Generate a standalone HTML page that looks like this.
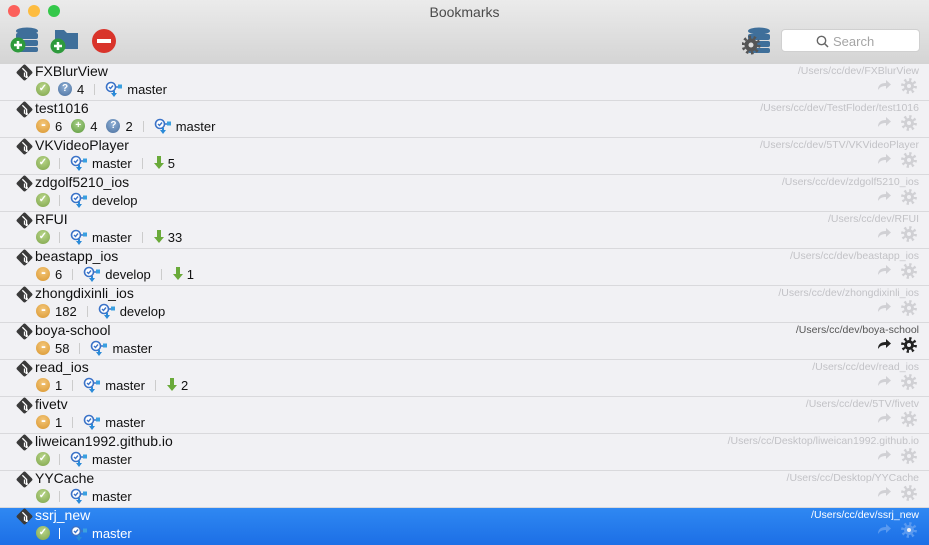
<!DOCTYPE html><html><head><meta charset="utf-8"><style>
*{margin:0;padding:0;box-sizing:border-box}
body{width:929px;height:543px;overflow:hidden;font-family:"Liberation Sans",sans-serif;background:#f0f0f2;position:relative}
.tb{position:absolute;left:0;top:0;width:929px;height:65px;background:linear-gradient(#ebebeb,#d4d4d4);border-bottom:1px solid #b5b5b5}
.title{position:absolute;top:4px;width:100%;text-align:center;font-size:14px;color:#4a4a4a}
.dot{position:absolute;top:5px;width:12px;height:12px;border-radius:50%}
.search{position:absolute;left:781px;top:29px;width:139px;height:23px;background:#fff;border-radius:4px;border:1px solid #d0d0d0;font-size:13px;color:#a5a5a5;padding:4px 0 0 51px}
.row{position:absolute;left:0;width:929px;height:37px;border-bottom:1px solid #d9d9dc;background:#f1f1f4}
.name{position:absolute;left:35px;top:-1px;font-size:14px;color:#111}
.gi{position:absolute;left:16px;top:0px}
.l2{position:absolute;left:36px;top:17px;height:16px;display:flex;align-items:center;font-size:13px;color:#111}
.c{width:14px;height:14px;border-radius:50%;display:inline-block;margin-right:5px;position:relative}
.ok{background:radial-gradient(circle at 50% 35%,#b9d68a,#7ea44a)}
.q{background:radial-gradient(circle at 50% 35%,#8fb0d6,#4a6f9e)}
.p{background:radial-gradient(circle at 50% 35%,#a9d08a,#5c9a3c)}
.m{background:radial-gradient(circle at 50% 35%,#f4c77a,#d9962f)}
.c i{position:absolute;left:0;top:0;width:14px;height:14px;color:#fff;font-style:normal;font-size:10px;font-weight:bold;text-align:center;line-height:14px}
.n{margin-right:9px}
.sep{width:1px;height:11px;background:#ccc;margin:0 10px 0 1px}
.br{margin-right:4px}
.path{position:absolute;right:10px;top:1px;font-size:10.5px;color:#c2c2c6}
.ic{position:absolute;top:15px}
.sel{background:linear-gradient(#2f88f2,#1c6fe6);border:none}
.sel .name,.sel .l2,.sel .path{color:#fff}
</style></head><body>
<div class="tb">
<div class="dot" style="left:8px;background:#fc605b"></div>
<div class="dot" style="left:28px;background:#fdbc40"></div>
<div class="dot" style="left:48px;background:#34c84a"></div>
<div class="title">Bookmarks</div>
<svg style="position:absolute;left:10px;top:26px" width="30" height="28"><ellipse cx="17" cy="5" rx="11" ry="3.5" fill="#3f6f9a"/><rect x="6" y="7" width="22" height="6" rx="2" fill="#3f6f9a"/><rect x="6" y="14" width="22" height="6" rx="2" fill="#3f6f9a"/><rect x="6" y="21" width="22" height="5" rx="2" fill="#3f6f9a"/><circle cx="8" cy="19" r="7.5" fill="#2e9a3c"/><path d="M8 15v8M4 19h8" stroke="#fff" stroke-width="2.5"/></svg>
<svg style="position:absolute;left:50px;top:28px" width="30" height="26"><path d="M5 2h9l3 3h11v16H5z" fill="#3f6f9a"/><circle cx="8" cy="18" r="7.5" fill="#2e9a3c"/><path d="M8 14v8M4 18h8" stroke="#fff" stroke-width="2.5"/></svg>
<svg style="position:absolute;left:91px;top:28px" width="26" height="26"><circle cx="13" cy="13" r="12" fill="#d9342b"/><rect x="6" y="11" width="14" height="4" fill="#fff"/></svg>
<svg style="position:absolute;left:742px;top:27px" width="30" height="28"><ellipse cx="17" cy="4" rx="11" ry="3.5" fill="#3f6f9a"/><rect x="6" y="7" width="22" height="6" rx="2" fill="#3f6f9a"/><rect x="6" y="14" width="22" height="6" rx="2" fill="#3f6f9a"/><rect x="6" y="21" width="22" height="5" rx="2" fill="#3f6f9a"/><circle cx="9" cy="18" r="6.5" fill="#555"/><circle cx="9" cy="18" r="8" fill="none" stroke="#555" stroke-width="3" stroke-dasharray="2.5 2.5"/><circle cx="9" cy="18" r="2.5" fill="#ddd"/></svg>
<div class="search"><svg style="position:absolute;left:34px;top:5px" width="13" height="13"><circle cx="5.5" cy="5.5" r="4.2" fill="none" stroke="#666" stroke-width="1.4"/><path d="M8.5 8.5l3.5 3.5" stroke="#666" stroke-width="1.5"/></svg>Search</div>
</div>
<div id="rows"></div>
<svg width="0" height="0" style="position:absolute"><defs>
<symbol id="git" viewBox="0 0 16 16"><rect x="2.3" y="2.3" width="11.4" height="11.4" transform="rotate(45 8 8)" rx="1.5" fill="#3a3a3a"/><path d="M6 4l4 4v4M8 8v4" stroke="#fff" stroke-width="1.2" fill="none"/><circle cx="10" cy="12" r="1.2" fill="#fff"/></symbol>
<symbol id="brn" viewBox="0 0 18 16"><circle cx="6" cy="6" r="4.5" fill="#fff" stroke="#3b73c8" stroke-width="1.6"/><path d="M4 6l1.5 1.5L8 4.5" stroke="#3b73c8" stroke-width="1.4" fill="none"/><path d="M10 6h4" stroke="#3b73c8" stroke-width="1.5"/><rect x="13" y="3.5" width="4" height="4" fill="#3aa0e0"/><path d="M8 10v2h-2l3 4 3-4h-2v-2z" fill="#2a8ad8"/></symbol>
<symbol id="dn" viewBox="0 0 12 14"><path d="M4 0h4v7h3l-5 6-5-6h3z" fill="#6aaa3a"/></symbol>
<symbol id="sh" viewBox="0 0 14 12"><path d="M1 11c0-5 3-7 8-7V1l5 4.5-5 4.5V7c-4 0-6 1-8 4z" fill="currentColor"/></symbol>
<symbol id="gr" viewBox="0 0 16 16"><circle cx="8" cy="8" r="5" fill="currentColor"/><circle cx="8" cy="8" r="6.3" fill="none" stroke="currentColor" stroke-width="3.2" stroke-dasharray="2.2 2.75"/><circle cx="8" cy="8" r="2" fill="#f1f1f4"/></symbol>
</defs></svg>
<script>
var D=[
["FXBlurView","/Users/cc/dev/FXBlurView",[["ok"],["q","4"],"|","b:master"]],
["test1016","/Users/cc/dev/TestFloder/test1016",[["m","6"],["p","4"],["q","2"],"|","b:master"]],
["VKVideoPlayer","/Users/cc/dev/5TV/VKVideoPlayer",[["ok"],"|","b:master","|","d:5"]],
["zdgolf5210_ios","/Users/cc/dev/zdgolf5210_ios",[["ok"],"|","b:develop"]],
["RFUI","/Users/cc/dev/RFUI",[["ok"],"|","b:master","|","d:33"]],
["beastapp_ios","/Users/cc/dev/beastapp_ios",[["m","6"],"|","b:develop","|","d:1"]],
["zhongdixinli_ios","/Users/cc/dev/zhongdixinli_ios",[["m","182"],"|","b:develop"]],
["boya-school","/Users/cc/dev/boya-school",[["m","58"],"|","b:master"]],
["read_ios","/Users/cc/dev/read_ios",[["m","1"],"|","b:master","|","d:2"]],
["fivetv","/Users/cc/dev/5TV/fivetv",[["m","1"],"|","b:master"]],
["liweican1992.github.io","/Users/cc/Desktop/liweican1992.github.io",[["ok"],"|","b:master"]],
["YYCache","/Users/cc/Desktop/YYCache",[["ok"],"|","b:master"]],
["ssrj_new","/Users/cc/dev/ssrj_new",[["ok"],"|","b:master"]]];
var g={ok:"✓",q:"?",p:"+",m:"•••"},h="";
D.forEach(function(r,i){
var s=i==12?" sel":"",hov=i==7;
h+='<div class="row'+s+'" style="top:'+(64+i*37)+'px"><svg class="gi" width="17" height="17"><use href="#git"/></svg><div class="name">'+r[0]+'</div><div class="path" style="'+(hov?'color:#555':'')+'">'+r[1]+'</div><div class="l2">';
r[2].forEach(function(x){
if(x=="|")h+='<span class="sep"'+(s?' style="background:#fff"':'')+'></span>';
else if(typeof x=="string"&&x[0]=="b")h+='<svg class="br" width="18" height="16"><use href="#brn"/></svg><span class="n">'+x.slice(2)+'</span>';
else if(typeof x=="string")h+='<svg width="12" height="14" style="margin-right:3px"><use href="#dn"/></svg><span class="n">'+x.slice(2)+'</span>';
else{h+='<span class="c '+x[0]+'"><i style="'+(x[0]=="m"?"font-size:6px;letter-spacing:-1px":"")+'">'+g[x[0]]+'</i></span>';if(x[1])h+='<span class="n">'+x[1]+'</span>';else h+='<span style="width:3px"></span>';}
});
var col=hov?'#222':(s?'#5a9af0':'#d0d0d4');
h+='</div><svg class="ic" style="left:877px;color:'+col+'" width="14" height="12"><use href="#sh"/></svg><svg class="ic" style="left:901px;top:14px;color:'+col+'" width="16" height="16"><use href="#gr"/></svg></div>';
});
document.getElementById("rows").innerHTML=h;
</script>
</body></html>
